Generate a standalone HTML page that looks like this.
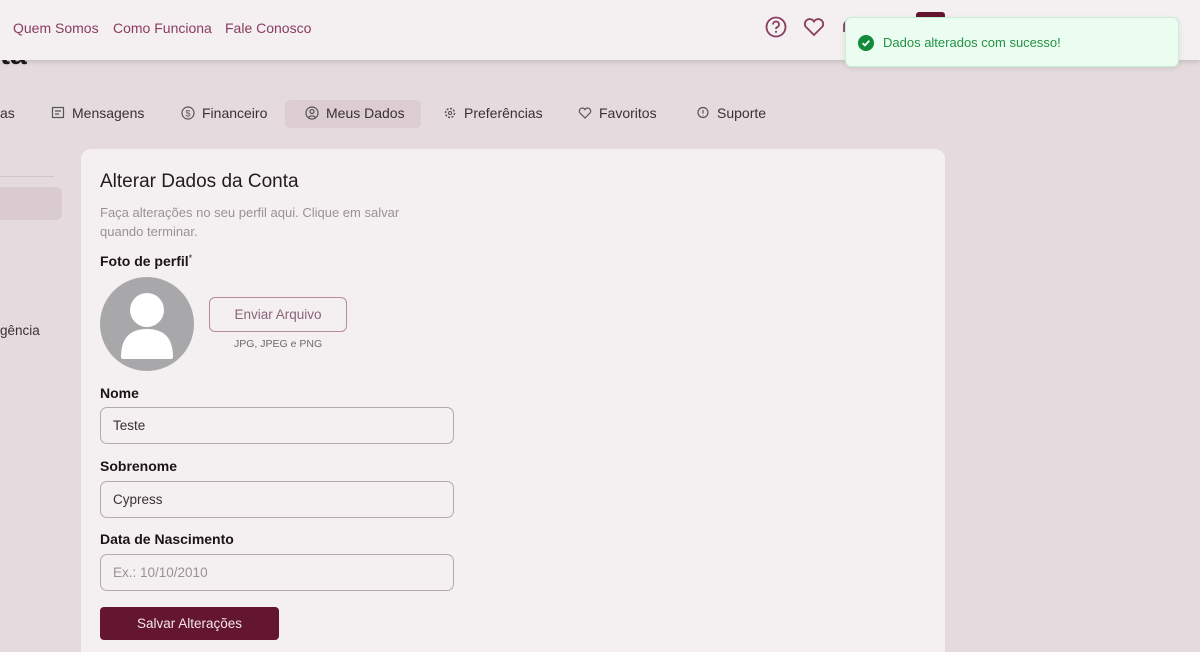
<!DOCTYPE html>
<html><head><meta charset="utf-8"><style>
*{box-sizing:border-box;margin:0;padding:0}
html{width:1200px;height:652px;overflow:hidden}
body{width:1200px;height:652px;overflow:hidden;background:#e5dbdf;font-family:"Liberation Sans",sans-serif;position:relative;color:#2a2228}
.hdr{position:absolute;left:0;top:0;width:1200px;height:60px;background:#f4eff1;box-shadow:0 2px 5px rgba(0,0,0,.15);z-index:5}
.hdr a{position:absolute;top:20px;font-size:14px;color:#8a3c5c;text-decoration:none}
.big{position:absolute;left:0;top:38px;font-size:30px;font-weight:bold;color:#1e1a1d;z-index:1}
.tab{position:absolute;top:105px;font-size:14px;color:#3a3036;display:flex;align-items:center;gap:7px}
.tab svg{width:14px;height:14px}
.card{position:absolute;left:81px;top:149px;width:864px;height:503px;background:#f4eff1;border-radius:10px 10px 0 0}
.lbl{position:absolute;left:100px;font-size:14px;font-weight:bold;color:#1a1418}
.inp{position:absolute;left:100px;width:354px;height:37px;border:1px solid #b3aaae;border-radius:7px;padding:0 12px;font-size:13.5px;line-height:35px;color:#3a3036}
</style></head><body>
<div class="hdr">
<a style="left:13px">Quem Somos</a><a style="left:113px">Como Funciona</a><a style="left:225px">Fale Conosco</a>
<svg style="position:absolute;left:765px;top:16px" width="22" height="22" viewBox="0 0 22 22"><circle cx="11" cy="11" r="9.5" fill="none" stroke="#8a3c5c" stroke-width="1.8"/><path d="M8 8.5a3 3 0 1 1 4 2.8c-.8.4-1 .9-1 1.7" fill="none" stroke="#8a3c5c" stroke-width="1.8"/><circle cx="11" cy="15.8" r="1.1" fill="#8a3c5c"/></svg>
<svg style="position:absolute;left:803px;top:17px" width="22" height="20" viewBox="0 0 22 20"><path d="M11 18L2.5 9.5a4.8 4.8 0 0 1 8.5-5 4.8 4.8 0 0 1 8.5 5z" fill="none" stroke="#8a3c5c" stroke-width="1.8"/></svg>
<svg style="position:absolute;left:840px;top:17px" width="20" height="20" viewBox="0 0 20 20"><path d="M4 15V9a6 6 0 0 1 12 0v6" fill="none" stroke="#8a3c5c" stroke-width="1.8"/></svg>
<div style="position:absolute;left:916px;top:12px;width:29px;height:20px;background:#64142f;border-radius:3px"></div>
</div>
<div class="big">ta</div>
<div style="position:absolute;left:845px;top:17px;width:334px;height:50px;background:#ebfcf1;border:1px solid #c5efd2;border-radius:6px;z-index:6;box-shadow:0 2px 6px rgba(0,0,0,.08)">
<svg style="position:absolute;left:12px;top:17px" width="16" height="16" viewBox="0 0 16 16"><circle cx="8" cy="8" r="8" fill="#138a3a"/><path d="M4.6 8.2l2.3 2.2 4.4-4.6" fill="none" stroke="#fff" stroke-width="1.8"/></svg>
<span style="position:absolute;left:37px;top:17px;font-size:13px;color:#249145">Dados alterados com sucesso!</span></div>
<div class="tab" style="left:0">as</div>
<div class="tab" style="left:51px"><svg viewBox="0 0 14 14"><rect x="1.5" y="1.5" width="11" height="10" fill="none" stroke="#555" stroke-width="1.2"/><path d="M4 5h6M4 8h4" stroke="#555" stroke-width="1.2"/></svg>Mensagens</div>
<div class="tab" style="left:181px"><svg viewBox="0 0 14 14"><circle cx="7" cy="7" r="6" fill="none" stroke="#555" stroke-width="1.2"/><text x="7" y="10.5" font-size="9" text-anchor="middle" fill="#555">$</text></svg>Financeiro</div>
<div style="position:absolute;left:285px;top:100px;width:136px;height:28px;background:#dccdd3;border-radius:5px"></div>
<div class="tab" style="left:305px"><svg viewBox="0 0 14 14"><circle cx="7" cy="7" r="6" fill="none" stroke="#555" stroke-width="1.2"/><circle cx="7" cy="5.5" r="2" fill="none" stroke="#555" stroke-width="1.2"/><path d="M3.5 11.5a4 3 0 0 1 7 0" fill="none" stroke="#555" stroke-width="1.2"/></svg>Meus Dados</div>
<div class="tab" style="left:443px"><svg viewBox="0 0 14 14"><circle cx="7" cy="7" r="4.5" fill="none" stroke="#555" stroke-width="1.5" stroke-dasharray="2 1.5"/><circle cx="7" cy="7" r="1.6" fill="none" stroke="#555" stroke-width="1.1"/></svg>Preferências</div>
<div class="tab" style="left:578px"><svg viewBox="0 0 14 14"><path d="M7 12L1.8 6.8a3 3 0 0 1 5.2-3.3 3 3 0 0 1 5.2 3.3z" fill="none" stroke="#555" stroke-width="1.2"/></svg>Favoritos</div>
<div class="tab" style="left:696px"><svg viewBox="0 0 14 14"><circle cx="7" cy="6.5" r="5" fill="none" stroke="#555" stroke-width="1.2"/><path d="M7 4v3.5M7 9v.5" stroke="#555" stroke-width="1.2"/></svg>Suporte</div>
<div style="position:absolute;left:0;top:176px;width:54px;height:1px;background:#d3c6cb"></div>
<div style="position:absolute;left:0;top:187px;width:62px;height:33px;background:#dacbd1;border-radius:0 6px 6px 0"></div>
<div style="position:absolute;left:0;top:323px;font-size:13.5px;color:#3a3036">gência</div>
<div class="card"></div>
<div style="position:absolute;left:100px;top:171px;font-size:19px;color:#221c20">Alterar Dados da Conta</div>
<div style="position:absolute;left:100px;top:203px;width:340px;font-size:13px;line-height:19px;color:#9a9296">Faça alterações no seu perfil aqui. Clique em salvar quando terminar.</div>
<div class="lbl" style="top:253px">Foto de perfil<span style="font-size:9px;vertical-align:top;font-weight:normal">*</span></div>
<svg style="position:absolute;left:100px;top:277px" width="94" height="94" viewBox="0 0 94 94"><circle cx="47" cy="47" r="47" fill="#a8a8aa"/><circle cx="47" cy="33" r="17" fill="#fff"/><path d="M21 80c0-20 10-28 26-28s26 8 26 28c0 1-1 2-2 2H23c-1 0-2-1-2-2z" fill="#fff"/></svg>
<div style="position:absolute;left:209px;top:297px;width:138px;height:35px;border:1px solid #b98c9e;border-radius:6px;text-align:center;line-height:33px;font-size:13.5px;color:#8a6475">Enviar Arquivo</div>
<div style="position:absolute;left:234px;top:338px;font-size:10.5px;color:#6e6a6c">JPG, JPEG e PNG</div>
<div class="lbl" style="top:385px">Nome</div>
<div class="inp" style="top:407px">Teste</div>
<div class="lbl" style="top:458px">Sobrenome</div>
<div class="inp" style="top:481px">Cypress</div>
<div class="lbl" style="top:531px">Data de Nascimento</div>
<div class="inp" style="top:554px;color:#9a9296">Ex.: 10/10/2010</div>
<div style="position:absolute;left:100px;top:607px;width:179px;height:33px;background:#64152f;border-radius:4px;color:#f2e6ea;text-align:center;line-height:33px;font-size:13.5px">Salvar Alterações</div>
</body></html>
